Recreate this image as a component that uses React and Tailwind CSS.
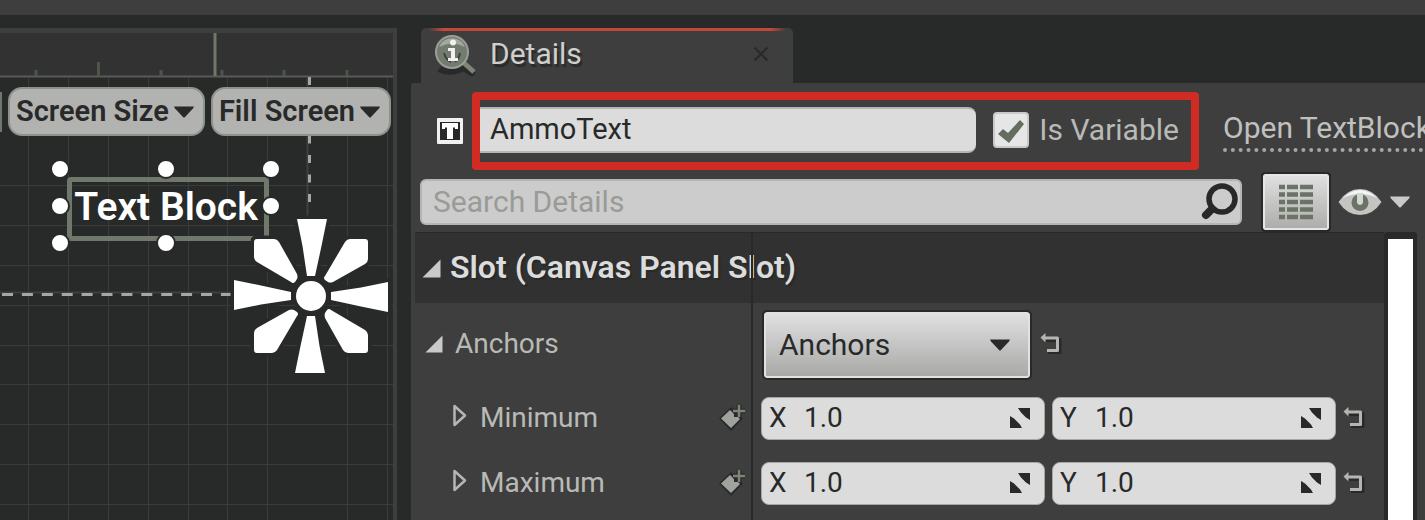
import React from "react";

const GRID_X = [28, 68, 108, 148, 188, 227, 267, 347, 387];
const GRID_Y = [152, 192, 232, 272, 312, 351, 391, 431, 471];
const TICKS = [36, 161, 222, 284, 347];
const HANDLES = [
  [60, 136], [166, 136], [271, 136],
  [60, 173], [271, 173],
  [60, 210], [166, 210],
];

function Caret({ className }) {
  return (
    <svg className={className} viewBox="0 0 22 12" aria-hidden="true">
      <path d="M1 0.5h20l-1 2L12 11q-1 1-2 0L2 2.5z" fill="currentColor" />
    </svg>
  );
}

function CanvasButton({ children }) {
  return (
    <button className="flex h-[49px] items-center gap-1 rounded-[14px] border-2 border-[#8d938a] bg-[#b2b2b1] pr-2 pl-[6px] text-[29px] leading-none font-semibold text-[#282a29]">
      {children}
      <Caret className="h-3 w-[22px]" />
    </button>
  );
}

function AnchorFlower() {
  return (
    <g
      transform="translate(311 263)"
      fill="#fff"
      stroke="#282a29"
      strokeWidth="7"
      strokeLinejoin="round"
      style={{ paintOrder: "stroke" }}
    >
      {[0, 90, 180, 270].map((a) => (
        <g key={a} transform={`rotate(${a})`}>
          <path d="M-14 -77H16L10.500 -50L4 -20H-4L-8.500 -50Z" />
          <path d="M-57 -54Q-57 -57 -54 -57H-37Q-34 -57 -32 -54L-14 -22Q-13 -19 -14 -17L-16 -14Q-18 -12 -20 -14L-54 -34Q-57 -36 -57 -39Z" />
        </g>
      ))}
      <circle r="15" />
    </g>
  );
}

function DesignerCanvas() {
  return (
    <section
      aria-label="Designer"
      className="relative mt-[13px] w-[397px] shrink-0 overflow-hidden border-t-[5px] border-r-4 border-[#3e3e3e] bg-[#282a29]"
    >
      <svg className="absolute inset-0 h-full w-full" aria-hidden="true">
        <rect width="393" height="43" fill="#313231" />
        <g stroke="#3a3c3a" strokeWidth="1">
          {GRID_X.map((x) => (
            <line key={x} x1={x + 0.5} x2={x + 0.5} y1="44" y2="100%" />
          ))}
          {GRID_Y.map((y) => (
            <line key={y} x1="0" x2="100%" y1={y + 0.5} y2={y + 0.5} />
          ))}
        </g>
        <path d="M0 43.5H393" stroke="#565b54" strokeWidth="2" />
        <path d="M215 0V43" stroke="#6f786b" strokeWidth="3" />
        <path d="M98.5 29V43" stroke="#4e534c" strokeWidth="3" />
        {TICKS.map((x) => (
          <path key={x} d={`M${x} 37V43`} stroke="#4e534c" strokeWidth="3" />
        ))}
        <path d="M0 259.5H234M307.5 45V186" stroke="#3e3e3e" strokeWidth="2" />
        <path d="M2 261.5H232" stroke="#a5a8a0" strokeWidth="3" strokeDasharray="11 8.9" />
        <path d="M309.5 44V175" stroke="#a5a8a0" strokeWidth="3" strokeDasharray="8 11.5" />
      </svg>

      <div className="absolute top-[54px] left-0 flex items-center gap-[6px]">
        <div className="h-10 w-[2px] bg-[#6f786b]" />
        <CanvasButton>Screen Size</CanvasButton>
        <CanvasButton>Fill Screen</CanvasButton>
      </div>

      <div className="absolute top-[144px] left-[67px] flex h-16 w-[202px] items-center justify-center rounded-[4px] border-[5px] border-[#6f786b] pr-1 pb-[3px] text-[39px] leading-none font-semibold whitespace-nowrap text-white">
        Text Block
      </div>

      <svg className="absolute inset-0 h-full w-full" aria-hidden="true">
        {HANDLES.map(([x, y]) => (
          <circle key={`${x}-${y}`} cx={x} cy={y} r="9" fill="#fff" stroke="#282a29" strokeWidth="2" />
        ))}
        <AnchorFlower />
      </svg>
    </section>
  );
}

function ResetButton() {
  return (
    <button aria-label="Reset to default" className="shrink-0 pb-1">
      <svg className="h-[22px] w-[22px]" viewBox="0 0 22 22" fill="none" aria-hidden="true">
        <path d="M4 8H19.500V20.500H8" stroke="#282a29" strokeWidth="4" strokeLinejoin="round" />
        <path d="M5 6H17.500V18.500H7" stroke="#b5b6b2" strokeWidth="3" strokeLinejoin="round" />
        <path d="M0.500 5.500L5.500 1V10.500Z" fill="#b5b6b2" />
      </svg>
    </button>
  );
}

function KeyframeButton({ name }) {
  return (
    <button aria-label={`Add keyframe for ${name}`} className="shrink-0">
      <svg className="h-7 w-7" viewBox="0 0 28 28" aria-hidden="true">
        <path d="M13 27L1 14.500L13 3L25 14.500Z" fill="#282a29" />
        <path d="M13 24L3 14.500L12 6L16 10V13H20L22 15Z" fill="#a0a29d" />
        <path d="M21 1V13M15 7H27" stroke="#282a29" strokeWidth="5" />
        <path d="M21 1V13M15 7H27" stroke="#7d8578" strokeWidth="2.500" />
      </svg>
    </button>
  );
}

function AxisField({ axis, name }) {
  return (
    <label className="flex h-[43px] min-w-0 flex-1 items-center rounded-[8px] border border-[#a5a8a0] bg-[#dcdcdc] pr-[13px] pb-[2px] pl-[7px] text-[28px] leading-none text-[#282a29]">
      <span className="w-[35px] shrink-0">{axis}</span>
      <input
        aria-label={`${name} ${axis}`}
        defaultValue="1.0"
        className="w-full min-w-0 bg-transparent outline-none"
      />
      <svg className="h-[22px] w-[22px] shrink-0" viewBox="0 0 22 22" fill="#282a29" aria-hidden="true">
        <path d="M9 1H21V13L17 10.500L12 5.500ZM1 9L5 11.500L11 17.500L13 21H1Z" />
      </svg>
    </label>
  );
}

function VectorRow({ name }) {
  return (
    <div className="flex h-[65px] items-center">
      <div className="flex w-[341px] shrink-0 items-center pr-[6px] pb-[2px] pl-[41px]">
        <button aria-label={`Expand ${name}`} className="pb-1">
          <svg className="h-6 w-4" viewBox="0 0 16 24" fill="none" aria-hidden="true">
            <path d="M2.500 2L13 11.500L2.500 21Z" stroke="#b5b6b2" strokeWidth="2.500" strokeLinejoin="round" />
          </svg>
        </button>
        <span className="flex-1 pl-3 text-[28px] leading-none text-[#b9bab6]">{name}</span>
        <KeyframeButton name={name} />
      </div>
      <div className="flex min-w-0 flex-1 items-center gap-[7px] pr-[19px] pl-[9px]">
        <AxisField axis="X" name={name} />
        <AxisField axis="Y" name={name} />
        <ResetButton />
      </div>
    </div>
  );
}

function Expanded({ className }) {
  return (
    <svg className={className} viewBox="0 0 19 19" aria-hidden="true">
      <path d="M18.500 0.500V18.500H0.500Z" fill="#c9c9c9" />
    </svg>
  );
}

function DetailsTab() {
  return (
    <div className="ml-[10px] flex h-[55px] w-[372px] items-center rounded-t-[5px] bg-[#3e3e3e] pr-[24px] pb-[3px] pl-[13px] [background-image:linear-gradient(90deg,transparent_2%,#c4473b_6%,#c4473b_94%,transparent_98%)] bg-[length:100%_3px] bg-no-repeat">
      <svg className="h-[43px] w-[43px]" viewBox="0 0 43 43" aria-hidden="true">
        <path d="M5 36Q16 42 30 35L40 42" fill="none" stroke="#282a29" strokeWidth="6" />
        <path d="M30 30L40 39" stroke="#7d8578" strokeWidth="5" />
        <circle cx="18" cy="19" r="16" fill="#727b6e" stroke="#9a9f96" strokeWidth="2" />
        <path d="M5 14A14 14 0 0 1 31 14Q18 7 5 14Z" fill="#a5a8a0" />
        <path d="M10 20Q12 27 17 29M26 20Q25 26 21 29" fill="none" stroke="#3e443c" strokeWidth="2" />
        <circle cx="19" cy="9.500" r="3" fill="#f1f1f1" />
        <path d="M14 15H21V25H24V28H14V25H17V18H14Z" fill="#f1f1f1" />
      </svg>
      <h2 className="flex-1 pl-[13px] text-[30px] leading-none text-[#cfcfce] [text-shadow:2px_3px_1px_#282a29]">Details</h2>
      <button aria-label="Close Details">
        <svg className="h-4 w-4" viewBox="0 0 16 16" aria-hidden="true">
          <path d="M1.500 1.500L14.500 14.500M14.500 1.500L1.500 14.500" stroke="#282a29" strokeWidth="2" />
        </svg>
      </button>
    </div>
  );
}

function NameRow() {
  return (
    <div className="flex items-center pl-[26px]">
      <svg className="mr-[9px] h-[26px] w-[26px] shrink-0" viewBox="0 0 26 26" aria-hidden="true">
        <rect width="26" height="26" rx="1" fill="#f1f1f1" />
        <rect x="3" y="4" width="20" height="18" fill="#282a29" />
        <path d="M5 5H21V11H18V9.500H16V21H10V9.500H8V11H5Z" fill="#fff" />
      </svg>
      <div className="flex h-[78px] w-[727px] shrink-0 items-center rounded-[4px] border-8 border-[#d02c23] pr-3 pb-[3px]">
        <input
          aria-label="Widget name"
          defaultValue="AmmoText"
          className="h-[46px] min-w-0 flex-1 rounded-r-[8px] border-y-2 border-[#b5b6b2] bg-[#dcdcdc] pb-[2px] pl-[10px] text-[29px] leading-none text-[#282a29] outline-none"
        />
        <label className="ml-[17px] flex items-center gap-[10px] text-[30px] leading-none text-[#b9bab6]">
          <span className="grid">
            <input
              type="checkbox"
              defaultChecked
              className="peer col-start-1 row-start-1 h-9 w-9 appearance-none rounded-[4px] border-2 border-[#c9c9c9] bg-[#e6e6e6]"
            />
            <svg className="pointer-events-none invisible col-start-1 row-start-1 h-9 w-9 peer-checked:visible" viewBox="0 0 36 36" aria-hidden="true">
              <path d="M5 22L10 17L15 21L27 8L31 12L16 31Z" fill="#646d60" />
            </svg>
          </span>
          Is Variable
        </label>
      </div>
      <a href="#textblock" className="ml-6 shrink-0 border-b-4 border-dotted border-[#a5a8a0] pb-[2px] text-[30px] leading-[36px] text-[#c0c1be]">
        Open TextBlock
      </a>
    </div>
  );
}

function SearchRow() {
  return (
    <div className="mt-1 flex items-center pr-[14px] pl-[9px]">
      <label className="flex h-[46px] min-w-0 flex-1 items-center rounded-[6px] border-2 border-[#b5b6b2] bg-[#cccccc] pr-[2px] pb-[2px] pl-[11px]">
        <input
          type="search"
          aria-label="Search Details"
          placeholder="Search Details"
          className="min-w-0 flex-1 bg-transparent text-[30px] leading-none outline-none placeholder:text-[#999b97]"
        />
        <svg className="h-[38px] w-[38px]" viewBox="0 0 38 38" fill="none" stroke="#282a29" aria-hidden="true">
          <circle cx="22" cy="17" r="13" strokeWidth="5.500" />
          <path d="M12 27L6 33" strokeWidth="8" strokeLinecap="round" />
        </svg>
      </label>
      <button
        aria-label="Property matrix"
        className="ml-[21px] flex h-[56px] w-[66px] items-center justify-center rounded-[2px] border-2 border-[#e6e6e6] bg-linear-to-b from-[#e0e0e0] to-[#adadac] outline-2 outline-[#282a29]"
      >
        <svg className="h-9 w-[34px]" viewBox="0 0 34 36" stroke="#6b7367" strokeWidth="4.500" aria-hidden="true">
          {[3, 10.5, 18, 25.5, 33].map((y) => (
            <path key={y} d={`M0 ${y}H6M8 ${y}H19M21 ${y}H34`} />
          ))}
        </svg>
      </button>
      <button aria-label="View options" className="ml-[9px] flex items-center gap-[7px] text-[#c9c9c9]">
        <svg className="h-7 w-11" viewBox="0 0 44 28" aria-hidden="true">
          <path d="M0.500 14Q9 1 22 1T43.500 14Q35 27 22 27T0.500 14Z" fill="#c4c4c2" />
          <path d="M5 10Q13 2 22 2T39 10Q31 6 22 6T5 10Z" fill="#f4f4f4" />
          <circle cx="22" cy="14.500" r="8.500" fill="#6b7367" />
          <path d="M19 5H25V15Q22 19 19 15Z" fill="#d4d4d2" />
        </svg>
        <Caret className="h-3 w-[22px]" />
      </button>
    </div>
  );
}

function Properties() {
  return (
    <div className="mt-[2px] flex flex-1">
      <div className="relative min-w-0 flex-1">
        <div className="ml-1 flex h-[71px] items-center border-t border-[#282a29] bg-[#303130] pb-[2px] pl-[7px]">
          <Expanded className="mt-[3px] h-[19px] w-[19px]" />
          <h3 className="pl-[9px] text-[32px] leading-none font-semibold text-[#dcdcdc] [text-shadow:2px_2px_1px_#282a29]">
            Slot (Canvas Panel Slot)
          </h3>
        </div>
        <div className="flex h-[83px] items-center">
          <div className="flex w-[341px] shrink-0 items-center pb-[2px] pl-[14px]">
            <Expanded className="h-[18px] w-[18px]" />
            <span className="pl-3 text-[28px] leading-none text-[#b9bab6]">Anchors</span>
          </div>
          <div className="flex items-center gap-[10px] pl-3">
            <button className="flex h-[66px] w-[266px] items-center justify-between rounded-[3px] border-2 border-[#e2e2e2] bg-linear-to-b from-[#e0e0e0] to-[#a9a9a8] pr-[17px] pl-[13px] text-[30px] leading-none text-[#282a29] outline-2 outline-[#282a29]">
              Anchors
              <Caret className="h-3 w-[22px]" />
            </button>
            <ResetButton />
          </div>
        </div>
        <VectorRow name="Minimum" />
        <VectorRow name="Maximum" />
        <div className="absolute inset-y-0 left-[340px] w-[2px] bg-[#282a29]" />
      </div>
      <div className="mr-2 w-[33px] shrink-0 rounded-t-[4px] border-x-4 border-t-[7px] border-[#282a29] bg-white" />
    </div>
  );
}

export default function App() {
  return (
    <div className="flex min-h-screen flex-col overflow-hidden bg-[#282a29] font-[Roboto,'Liberation_Sans',sans-serif]">
      <div className="h-[15px] shrink-0 bg-[#3e3e3e]" />
      <main className="flex flex-1">
        <DesignerCanvas />
        <section aria-label="Details" className="ml-[14px] flex min-w-0 flex-1 flex-col pt-[13px]">
          <DetailsTab />
          <div className="flex flex-1 flex-col overflow-hidden rounded-tl-[3px] bg-[#3e3e3e] pt-[9px]">
            <NameRow />
            <SearchRow />
            <Properties />
          </div>
        </section>
      </main>
    </div>
  );
}
